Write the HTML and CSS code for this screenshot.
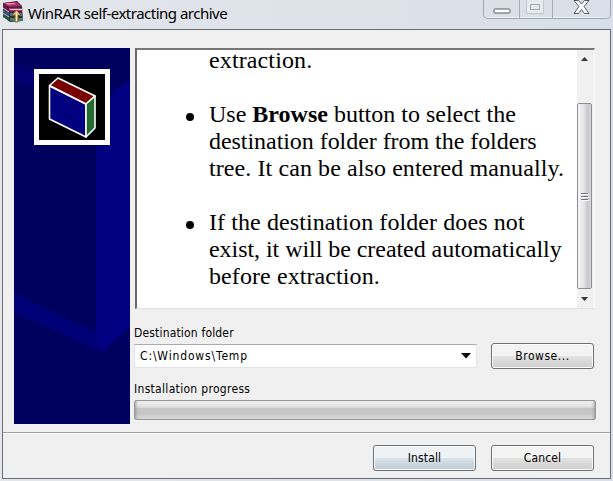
FILE: index.html
```
<!DOCTYPE html>
<html lang="en">
<head>
<meta charset="utf-8">
<title>WinRAR self-extracting archive</title>
<link rel="stylesheet" href="styles.css">
</head>
<body>
<div class="window">
  <header class="titlebar">
    <svg class="app-icon" width="22" height="22" viewBox="0 0 22 22">
      <path d="M1 2 15 0 20 5 21 20 8 21 1 15Z" fill="#392c35"/>
      <path d="M1 2 14 1 20 5 7 6Z" fill="#b52368"/>
      <path d="M3 2 12 2 15 3 6 4Z" fill="#e184ad"/>
      <path d="M1 3 7 7V10L1 6Z" fill="#711542"/>
      <path d="M7 7H20V10H7Z" fill="#c52c68"/>
      <path d="M8 8H20V9H8Z" fill="#ddd0ce"/>
      <path d="M1 8 7 12V15L1 11Z" fill="#315693"/>
      <path d="M8 12H20V15H8Z" fill="#4d7396"/>
      <path d="M1 12 7 16V20L1 16Z" fill="#205640"/>
      <path d="M8 17H21V20H8Z" fill="#37886e"/>
      <path d="M1 7 7 11M1 12 7 16" stroke="#d7c9b5"/>
      <path d="M13 21V14H10L14.500 9 19 14H16V21Z" fill="#e1bb78" stroke="#735331" stroke-width=".8"/>
      <path d="M14.500 11V20" stroke="#fff0b8"/>
    </svg>
    <h1 class="title">WinRAR self-extracting archive</h1>
    <div class="controls">
      <span class="control minimize"><svg width="18" height="6"><rect x="1" y="1" width="16" height="4" rx="1" fill="#fff" stroke="#555b66"/></svg></span>
      <span class="control maximize"><svg width="18" height="14"><path d="M.5 0V13.500H17.500V0" fill="#e7eaee" stroke="#c1c6cc"/><rect x="4.500" y="4.500" width="9" height="5" fill="#e5e8ed" stroke="#a5abb3"/></svg></span>
      <span class="control close"><svg width="17" height="15"><path d="M1 .5H5.500L8.500 4 11.500.5H16L11 6.500 16 13.500H11.500L8.500 9.500 5.500 13.500H1L6 6.500Z" fill="#fff" stroke="#555b66"/></svg></span>
    </div>
  </header>
  <main class="client">
    <section class="content">
      <svg class="banner" width="116" height="376" viewBox="0 0 116 376">
        <path fill="#00005e" d="M0 0H116V376H0Z"/>
        <path fill="#000070" d="M0 15 36 32V48L0 32Z"/>
        <path fill="#000080" d="M116 33Q100 40 95 49L82 97V285L0 245V264L88 304 116 279Z"/>
        <path fill="#000077" d="M0 245 82 285 88 304 0 264Z"/>
        <path fill="#fff" d="M20 21H96V97H20Z"/>
        <path fill="#000" d="M25 26H91V92H25Z"/>
        <g stroke="#fff" stroke-width="1.600" stroke-linejoin="round">
          <path fill="#00007e" d="M35.500 38 72 56V89L35.500 71Z"/>
          <path fill="#780000" d="M35.500 37.500 44 30 81 48 72 56Z"/>
          <path fill="#246b2e" d="M72 56 81 48V80L72 89Z"/>
        </g>
      </svg>
      <div class="form">
        <div class="notes">
          <div class="notes-text">
            <p class="tail">extraction.</p>
            <ul>
              <li>Use <b>Browse</b> button to select the<br><span class="tight">destination folder from the folders</span><br><span class="loose">tree. It can be also entered manually.</span></li>
              <li><span class="loose">If the destination folder does not</span><br><span class="tight">exist, it will be created automatically</span><br><span class="loose">before extraction.</span></li>
            </ul>
          </div>
          <div class="scrollbar">
            <svg class="arrow" width="7" height="4"><path d="M0 4 3.500 0 7 4Z"/></svg>
            <div class="thumb"><svg width="8" height="9"><path d="M0 1.500H7M0 4.500H7M0 7.500H7" stroke="#70747a"/><path d="M1 2.500H8M1 5.500H8M1 8.500H8" stroke="#fff"/></svg></div>
            <svg class="arrow" width="7" height="4"><path d="M0 0H7L3.500 4Z"/></svg>
          </div>
        </div>
        <div class="label label-folder"><span>Destination folder</span></div>
        <div class="row">
          <div class="combo"><span>C:\Windows\Temp</span><svg width="10" height="6"><path d="M0 0H10L5 5.500Z"/></svg></div>
          <button class="button browse"><span>Browse...</span></button>
        </div>
        <div class="label label-progress"><span>Installation progress</span></div>
        <div class="progress"></div>
      </div>
    </section>
    <footer class="actions">
      <button class="button install"><span>Install</span></button>
      <button class="button cancel"><span>Cancel</span></button>
    </footer>
  </main>
</div>
</body>
</html>
```
FILE: styles.css
```
* { box-sizing: border-box; }
body {
  margin: 0;
  overflow: hidden;
  color: #000;
  font: 12px "DejaVu Sans Condensed", "DejaVu Sans", sans-serif;
}
svg { display: block; flex: none; }
.window {
  width: 613px;
  height: 481px;
  padding: 0 2px 2px;
  display: flex;
  flex-direction: column;
  background: linear-gradient(90deg, #e3e6eb, #d9dfe8);
}
.titlebar { height: 29px; flex: none; display: flex; align-items: flex-start; }
.app-icon { margin-top: 1px; }
.title {
  margin: 2px 0 0 4px;
  font: 15px/22px "Noto Sans", sans-serif;
  letter-spacing: -.5px;
  white-space: nowrap;
}
.controls {
  width: 128px;
  height: 19px;
  margin-left: auto;
  display: flex;
  border: 1px solid #a1a7b0;
  border-top: 0;
  border-radius: 0 0 5px 5px;
  box-shadow: inset 0 -1px #edf0f4;
}
.control { display: flex; justify-content: center; }
.control + .control { border-left: 1px solid #a8aeb7; }
.minimize { width: 35px; padding-top: 8px; }
.maximize { width: 33px; padding-right: 3px; }
.close { flex: 1; }
.client {
  flex: 1;
  width: 609px;
  border: 1px solid #696e75;
  background: #f0f0f0;
}
.content {
  height: 403px;
  padding: 18px 14px 0 11px;
  display: flex;
  gap: 4px;
  border-bottom: 1px solid #a0a0a0;
  box-shadow: 0 1px #fff;
}
.form { width: 462px; }
.notes {
  width: 460px;
  height: 261px;
  margin-left: 1px;
  display: flex;
  justify-content: space-between;
  overflow: hidden;
  border: 2px solid #69696d;
  border-top-color: #777;
  border-right: 1px solid #fff;
  border-bottom: 1px solid #e2e2e2;
  background: #fff;
}
.notes-text {
  margin: -3px 0 0 72px;
  font: 24px/27px "Liberation Serif", serif;
  white-space: nowrap;
}
.tail { margin: 0 0 27px; letter-spacing: .12px; }
.tight { letter-spacing: -.05px; }
.loose { letter-spacing: .09px; }
.notes ul { margin: 0; padding: 0; list-style: none; }
.notes li { margin-bottom: 27px; }
.notes li::before {
  content: "";
  float: left;
  width: 8px;
  height: 8px;
  margin: 12px 0 0 -23px;
  border-radius: 50%;
  background: #000;
}
.scrollbar {
  width: 17px;
  padding: 7px 2px 7px 0;
  display: flex;
  flex-direction: column;
  align-items: center;
  background: #f0f0f0;
}
.arrow { fill: #333; }
.thumb {
  width: 15px;
  height: 187px;
  margin: 42px 0 8px;
  display: grid;
  place-items: center;
  border: 1px solid #8d8f93;
  border-radius: 2px;
  background: linear-gradient(90deg, #f6f6f7, #e5e5e8 45%, #c7c7cc 75%, #d8d8dc);
}
.label { line-height: 16px; white-space: nowrap; }
.label-folder { margin-top: 16px; letter-spacing: .17px; }
.label-progress { margin-top: 12px; letter-spacing: .31px; }
.row { display: flex; height: 26px; margin-top: 2px; justify-content: space-between; }
.combo {
  width: 343px;
  height: 24px;
  margin-top: 1px;
  padding: 0 5px;
  display: flex;
  align-items: center;
  justify-content: space-between;
  border: 1px solid #e1e4ea;
  border-top-color: #a7abb2;
  background: #fff;
  letter-spacing: .85px;
}
.button {
  width: 103px;
  height: 26px;
  padding: 0;
  border: 1px solid #707070;
  border-radius: 3px;
  background: linear-gradient(#f3f3f3 0 48%, #e2e2e2 52%, #cecece);
  box-shadow: inset 0 0 0 1px #fafafa;
  font: inherit;
  letter-spacing: .15px;
}
.browse { margin-right: 2px; letter-spacing: .55px; }
.install { background: linear-gradient(#eef2f5 0 48%, #d9e3eb 52%, #bdcbd5); border-color: #66717a; }
.progress {
  height: 20px;
  margin-top: 3px;
  border: 1px solid #999;
  border-radius: 2px;
  background: linear-gradient(#f3f3f3, #dedede 35%, #c5c5c5 40%, #c8c8c8 75%, #dcdcdc);
  box-shadow: inset 3px 0 3px -2px #999, inset -3px 0 3px -2px #999;
}
.actions { display: flex; justify-content: flex-end; gap: 15px; padding: 12px 16px 0 0; }
```
